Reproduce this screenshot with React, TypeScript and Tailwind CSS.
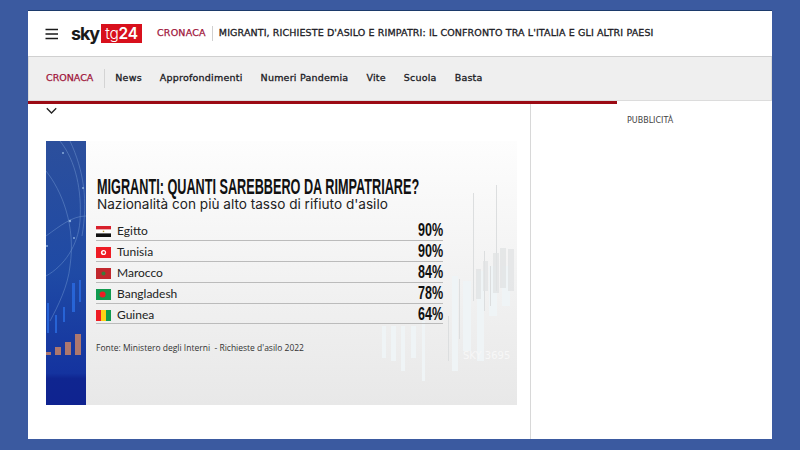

const dejavu = "font-['DejaVu_Sans',sans-serif]";

function Flag({ kind }: { kind: string }) {
  return (
    <svg width="15" height="11" viewBox="0 0 15 11" className="shrink-0">
      {kind === "eg" && (<><rect width="15" height="3.6" fill="#d8202c" /><rect y="3.6" width="15" height="3.8" fill="#fff" /><rect y="7.4" width="15" height="3.6" fill="#111" /><rect x="6.8" y="4.7" width="1.4" height="1.4" fill="#b89a3a" /></>)}
      {kind === "tn" && (<><rect width="15" height="11" fill="#ee1c25" /><circle cx="7.5" cy="5.5" r="2.6" fill="#fff" /><circle cx="7.7" cy="5.5" r="1.2" fill="#e22" /></>)}
      {kind === "ma" && (<><rect width="15" height="11" fill="#c1272d" /><circle cx="7.5" cy="5.5" r="2" fill="#3d7a3a" /></>)}
      {kind === "bd" && (<><rect width="15" height="11" fill="#119a4e" /><circle cx="6.6" cy="5.5" r="3" fill="#ee1c25" /></>)}
      {kind === "gn" && (<><rect width="5" height="11" fill="#ee1c25" /><rect x="5" width="5" height="11" fill="#fcd116" /><rect x="10" width="5" height="11" fill="#119a4e" /></>)}
    </svg>
  );
}

const rows = [
  ["eg", "Egitto", "90%"],
  ["tn", "Tunisia", "90%"],
  ["ma", "Marocco", "84%"],
  ["bd", "Bangladesh", "78%"],
  ["gn", "Guinea", "64%"],
];

function LeftStrip() {
  return (
    <svg width="40" height="264" viewBox="0 0 40 264" className="block shrink-0">
      <defs>
        <linearGradient id="strip" x1="0" y1="0" x2="0" y2="1">
          <stop offset="0" stopColor="#2c4f9c" />
          <stop offset="0.5" stopColor="#1f4aa5" />
          <stop offset="0.88" stopColor="#14339f" />
          <stop offset="0.9" stopColor="#0f2590" />
          <stop offset="1" stopColor="#0f2390" />
        </linearGradient>
      </defs>
      <rect width="40" height="264" fill="url(#strip)" />
      <g fill="none" stroke="#7ea3d8" strokeWidth="0.6" opacity="0.7">
        <path d="M14 0 C30 20 36 50 34 80 C32 105 18 125 0 135" />
        <path d="M0 30 C16 50 30 85 24 125 C22 145 12 165 4 180" />
        <path d="M24 0 C38 30 42 60 36 95" />
        <path d="M0 95 C14 85 26 75 40 75" />
      </g>
      <g fill="#9fc0ea" opacity="0.8">
        <circle cx="17" cy="12" r="1" /><circle cx="37" cy="47" r="1" /><circle cx="24" cy="80" r="1.2" /><circle cx="28" cy="97" r="1" /><circle cx="1" cy="105" r="1" />
      </g>
      <g fill="#2a6adf" opacity="0.85">
        <rect x="1" y="162" width="2" height="30" /><rect x="9" y="174" width="2" height="18" /><rect x="17" y="166" width="2" height="15" /><rect x="26" y="142" width="3" height="29" /><rect x="33" y="139" width="2" height="22" />
      </g>
      <g fill="#ad776e">
        <rect x="0" y="211" width="5" height="3" /><rect x="9" y="206" width="6" height="8" /><rect x="19" y="201" width="6" height="13" /><rect x="29" y="193" width="6" height="21" />
      </g>
    </svg>
  );
}

function BackChart() {
  return (
    <svg width="160" height="264" viewBox="0 0 160 264" className="absolute right-0 top-0">
      <g fill="#eff4f6">
        <rect x="25" y="185" width="4" height="32" /><rect x="34" y="185" width="5" height="35" /><rect x="44" y="185" width="4" height="45" /><rect x="54" y="185" width="5" height="32" /><rect x="65" y="180" width="3" height="60" />
        <rect x="95" y="135" width="6" height="95" /><rect x="106" y="140" width="8" height="70" /><rect x="120" y="130" width="7" height="90" /><rect x="132" y="125" width="8" height="50" /><rect x="145" y="125" width="8" height="40" />
      </g>
      <g fill="#dcdedf">
        <rect x="91" y="175" width="1" height="45" /><rect x="102" y="138" width="1" height="60" /><rect x="116" y="52" width="1" height="108" /><rect x="127" y="110" width="1" height="60" /><rect x="133" y="125" width="1" height="40" /><rect x="139" y="44" width="1" height="106" />
      </g>
      <g fill="#e2e4e5" opacity="0.8">
        <rect x="119" y="128" width="5" height="30" /><rect x="126" y="120" width="5" height="30" /><rect x="136" y="112" width="6" height="40" /><rect x="143" y="107" width="6" height="40" /><rect x="151" y="108" width="6" height="42" />
      </g>
      <text x="106" y="218" fill="#f7f7f7" fontSize="10" fontFamily="'DejaVu Sans',sans-serif">SKY 3695</text>
    </svg>
  );
}

export default function App() {
  return (
    <div className="h-[450px] w-[800px] overflow-hidden bg-[#3b5aa0] pb-[11px] pl-[28px] pr-[28px] pt-[11px]">
      <div className={`flex h-[428px] w-[744px] flex-col bg-white shadow-[0_-1px_0_#1c3a6b] ${dejavu}`}>
        {/* Top header */}
        <div className="flex h-[46px] shrink-0 items-center border-b border-[#d0d0d0] pl-[17px]">
          <svg width="14" height="12" viewBox="0 0 14 12" className="shrink-0">
            <path d="M0.5 1.5H13M0.5 6H13M0.5 10.5H13" stroke="#1a1a1a" strokeWidth="1.6" />
          </svg>
          <div className="ml-[12px] flex items-center">
            <span className="w-[27px] font-['Inter',sans-serif] text-[18px] font-bold leading-none tracking-[-1.2px] text-[#1a1a1a]">sky</span>
            <span className="ml-[3px] flex h-[19px] w-[41px] items-center justify-center bg-[#d8101c] font-['Inter',sans-serif] text-[15.5px] leading-none tracking-[-0.3px] text-white">
              <span className="font-light">tg</span><span className="font-semibold">24</span>
            </span>
          </div>
          <span className="ml-[15px] text-[9.5px] tracking-[0.22px] text-[#a0153a] [-webkit-text-stroke:0.25px_#a0153a]">CRONACA</span>
          <span className="mx-[6px] h-[15px] w-px bg-[#d0d0d0]" />
          <span className="text-[9.5px] tracking-[0.12px] text-[#1a1a24] [-webkit-text-stroke:0.3px_#1a1a24]">MIGRANTI, RICHIESTE D'ASILO E RIMPATRI: IL CONFRONTO TRA L'ITALIA E GLI ALTRI PAESI</span>
        </div>
        {/* Nav */}
        <div className="flex h-[44px] shrink-0 items-center border-x border-b border-[#dcdcdc] bg-[#efefef] pl-[17px]">
          <span className="text-[9.5px] tracking-[0px] text-[#a0153a] [-webkit-text-stroke:0.25px_#a0153a]">CRONACA</span>
          <span className="ml-[11px] h-[19px] w-px bg-[#d4d4d4]" />
          <div className="ml-[10px] flex items-center gap-[18px] text-[9.5px] tracking-[0.22px] text-[#1a1a24] [-webkit-text-stroke:0.3px_#1a1a24]">
            <span>News</span>
            <span>Approfondimenti</span>
            <span>Numeri Pandemia</span>
            <span>Vite</span>
            <span>Scuola</span>
            <span>Basta</span>
          </div>
        </div>
        <div className="h-[3px] w-[589px] shrink-0 bg-[#9b0a14]" />
        {/* Body */}
        <div className="flex min-h-0 flex-1">
          <div className="w-[503px] shrink-0 border-r border-[#d8d8d8]">
            <div className="h-[37px] pl-[18px] pt-[3px]">
              <svg width="11" height="8" viewBox="0 0 11 8" className="block">
                <path d="M0.8 1.2L5.5 6L10.2 1.2" fill="none" stroke="#222" strokeWidth="1.3" />
              </svg>
            </div>
            <div className="relative ml-[18px] flex h-[264px] w-[471px] overflow-hidden bg-gradient-to-b from-[#fdfdfd] to-[#e8e8e8]">
              <LeftStrip />
              <BackChart />
              <div className="relative flex-1 pl-[11px] pt-[36px]">
                <div className="h-[21px] w-[560px] origin-left scale-x-[0.576] whitespace-nowrap font-['Liberation_Sans',sans-serif] text-[22px] font-bold leading-[20px] text-[#111]">MIGRANTI: QUANTI SAREBBERO DA RIMPATRIARE?</div>
                <div className="whitespace-nowrap font-['Inter',sans-serif] text-[13.6px] leading-[13px] text-[#222]">Nazionalità con più alto tasso di rifiuto d'asilo</div>
                <div className="-ml-px mt-[9px] w-[347px] font-['Lato',sans-serif] text-[12px] text-[#222]">
                  {rows.map(([k, name, v]) => (
                    <div key={name} className="flex h-[20.9px] items-center border-b border-[#bbbbbb] pt-[3px]">
                      <Flag kind={k} />
                      <span className="ml-[6px]">{name}</span>
                      <span className="ml-auto -mt-[3px] origin-right scale-x-[0.66] font-['Liberation_Sans',sans-serif] text-[19px] font-bold leading-none text-[#111]">{v}</span>
                    </div>
                  ))}
                </div>
                <div className="-ml-px mt-[18px] whitespace-nowrap font-['Open_Sans',sans-serif] text-[8.5px] leading-[12px] text-[#333]">Fonte: Ministero degli Interni&nbsp; - Richieste d'asilo 2022</div>
              </div>
            </div>
          </div>
          <div className="flex-1">
            <div className="pl-[96px] pt-[11px] text-[8px] leading-[12px] text-[#444]">PUBBLICITÀ</div>
          </div>
        </div>
      </div>
    </div>
  );
}
